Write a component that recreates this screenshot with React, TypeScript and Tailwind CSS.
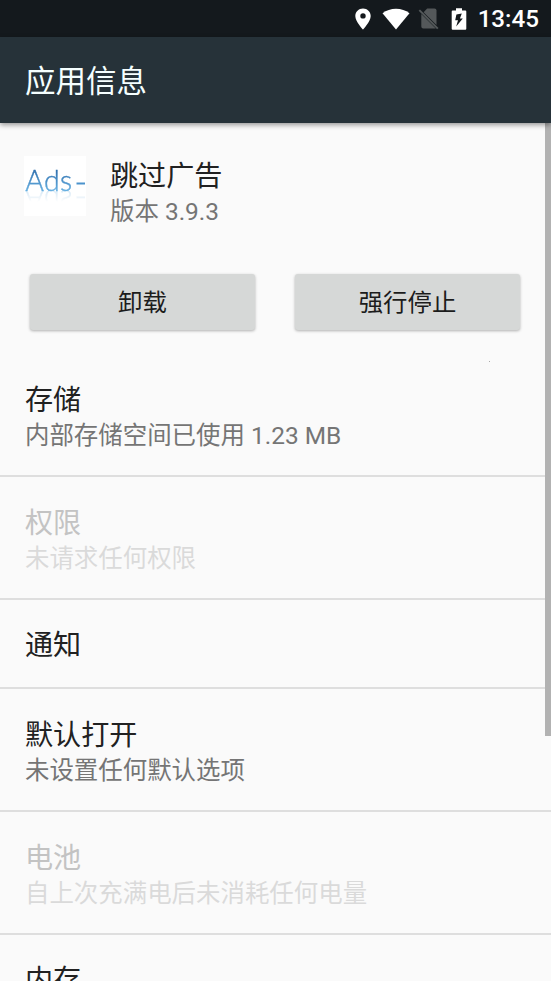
import React from "react";

type Setting = {
  title: string;
  summary?: string;
  disabled?: boolean;
};

const settings: Setting[] = [
  { title: "存储", summary: "内部存储空间已使用 1.23 MB" },
  { title: "权限", summary: "未请求任何权限", disabled: true },
  { title: "通知" },
  { title: "默认打开", summary: "未设置任何默认选项" },
  { title: "电池", summary: "自上次充满电后未消耗任何电量", disabled: true },
  { title: "内存" },
];

const StatusBar = () => {
  return (
    <div className="flex h-[37px] shrink-0 items-center justify-end bg-[#14191d] pr-[12px] text-white">
      <svg width="16" height="22" viewBox="0 0 16 22" fill="#fff">
        <path
          fillRule="evenodd"
          d="M8 0.5C3.7 0.5 0.3 3.8 0.3 8c0 5.600 7.700 13.500 7.700 13.500S15.700 13.600 15.700 8C15.700 3.800 12.300 0.500 8 0.500zM8 5.200a2.700 2.700 0 1 1 0 5.400a2.700 2.700 0 0 1 0-5.400z"
        />
      </svg>
      <svg className="ml-[11px]" width="28" height="22" viewBox="0 0 28 22" fill="#fff">
        <path d="M0.500 5.200C4.200 2.300 9 0.700 14 0.700s9.800 1.600 13.500 4.500L14 21.500z" />
      </svg>
      <svg className="ml-[8px]" width="22" height="23" viewBox="0 0 22 23">
        <path d="M9.200 1.500h7.300a2 2 0 0 1 2 2v14.600L5.600 5.200z" fill="#54585a" />
        <path d="M3.300 7L17.800 21.500H5.300a2 2 0 0 1-2-2z" fill="#54585a" />
        <path d="M1.300 3.200l18.500 18.500" stroke="#54585a" strokeWidth="1.900" />
      </svg>
      <svg className="ml-[11px]" width="16" height="22" viewBox="0 0 16 22">
        <path
          d="M5 0.300h6v2.200h3.300q1 0 1 1v17.200q0 1-1 1H1.700q-1 0-1-1V3.500q0-1 1-1H5z"
          fill="#fff"
        />
        <path d="M10.800 5.600L5.400 6.400L4.200 12.300H7L5.200 18.600L11.800 10.600H8.900z" fill="#14191d" />
      </svg>
      <span className="ml-[11px] pt-[2px] text-[24.2px] leading-[35px] font-medium">13:45</span>
    </div>
  );
};

const AppIcon = () => {
  return (
    <div className="h-[60px] w-[62px] shrink-0 overflow-hidden bg-white">
      <div className="h-[36px] [-webkit-box-reflect:below_-3px_linear-gradient(transparent_65%,rgba(0,0,0,0.3))]">
        <svg width="62" height="36" viewBox="0 0 62 36">
          <defs>
            <linearGradient id="ink" x1="0" y1="12" x2="0" y2="36" gradientUnits="userSpaceOnUse">
              <stop offset="0" stopColor="#2868a8" />
              <stop offset="1" stopColor="#69b3e4" />
            </linearGradient>
          </defs>
          <text
            x="1.2"
            y="35"
            textLength="47"
            fontFamily="Lato, sans-serif"
            fontWeight="300"
            fontSize="28.5"
            fill="url(#ink)"
            stroke="url(#ink)"
            strokeWidth="0.4"
          >
            Ads
          </text>
          <path d="M52.500 27.500h8.500" stroke="#4b93cc" strokeWidth="2" />
        </svg>
      </div>
    </div>
  );
};

const ActionButton = ({ children }: { children: React.ReactNode }) => {
  return (
    <button
      type="button"
      className="h-[56px] w-[225px] rounded-[3px] bg-[#d6d8d7] pt-[3px] text-[24.4px] text-[#1c1c1c] shadow-[0_1px_3px_rgba(0,0,0,0.3)]"
    >
      {children}
    </button>
  );
};

const SettingRow = ({ title, summary, disabled }: Setting) => {
  return (
    <div
      className={`flex shrink-0 flex-col justify-center border-b-2 border-[#dedede] px-[25px] ${
        summary ? "h-[123px] pt-[6px]" : "h-[89px] pt-[4px]"
      }`}
    >
      <p
        className={`text-[28.1px] leading-[37px] ${
          disabled ? "text-[#c3c3c3]" : "text-[#212121]"
        }`}
      >
        {title}
      </p>
      {summary && (
        <p
          className={`text-[24.45px] leading-[34px] ${
            disabled ? "text-[#dadada]" : "text-[#757575]"
          }`}
        >
          {summary}
        </p>
      )}
    </div>
  );
};

const App = () => {
  return (
    <div className="relative flex h-[981px] w-[551px] flex-col overflow-hidden bg-[#fafafa] font-[Roboto,'Noto_Sans_CJK_SC',sans-serif] whitespace-nowrap">
      <StatusBar />
      <header className="z-10 flex h-[86px] shrink-0 items-center bg-[#263239] px-[25px] pt-[4px] shadow-[0_2px_5px_rgba(0,0,0,0.4)]">
        <h1 className="text-[30.5px] text-[#f5ffff]">应用信息</h1>
      </header>

      <main className="flex flex-col">
        <section className="flex h-[151px] shrink-0 pt-[33px] pl-[24px]">
          <AppIcon />
          <div className="mt-[2px] ml-[24px]">
            <p className="text-[28.1px] leading-[37px] text-[#212121]">跳过广告</p>
            <p className="text-[24.45px] leading-[34px] text-[#757575]">版本 3.9.3</p>
          </div>
        </section>
        <section className="flex h-[80px] shrink-0 gap-[40px] pl-[30px]">
          <ActionButton>卸载</ActionButton>
          <ActionButton>强行停止</ActionButton>
        </section>
        {settings.map((item) => (
          <SettingRow key={item.title} {...item} />
        ))}
      </main>

      {/* scrollbar thumb */}
      <div className="absolute top-[123px] right-0 h-[613px] w-[6px] bg-[#b2b2b2]" />
      <div className="absolute top-[361px] left-[489px] size-px bg-[#aaa]" />
    </div>
  );
};

export default App;
